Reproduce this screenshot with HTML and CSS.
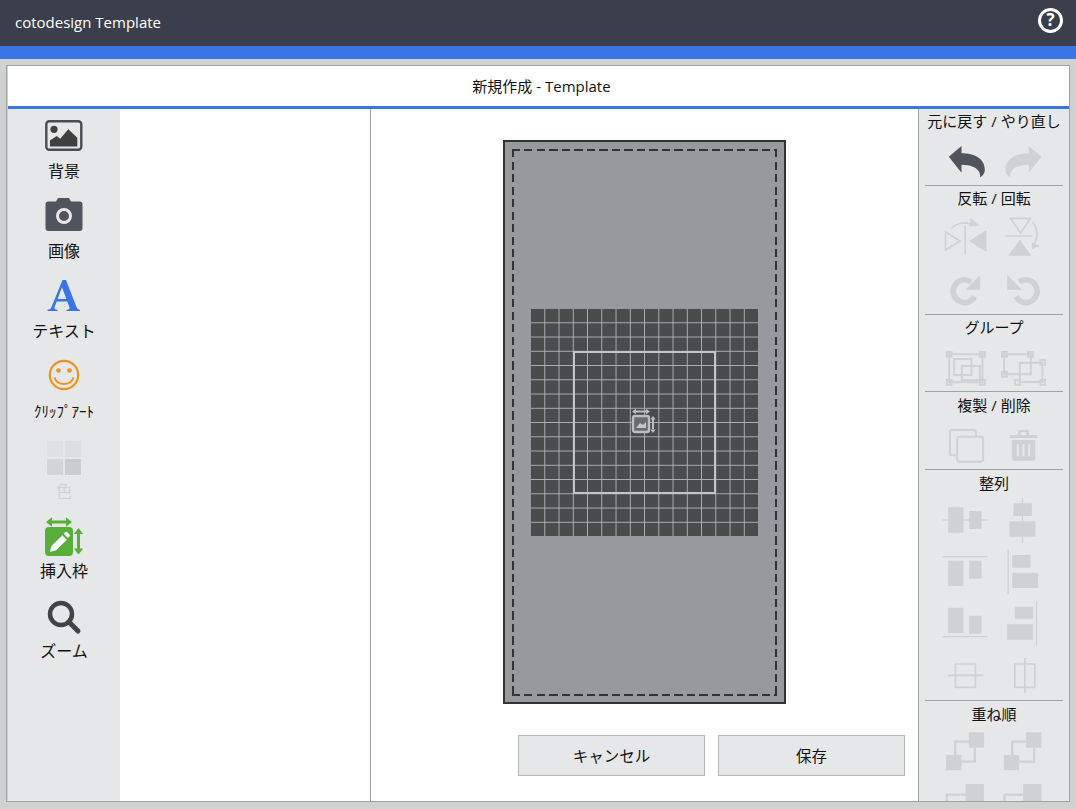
FILE: index.html
```html
<!DOCTYPE html>
<html lang="ja">
<head>
<meta charset="utf-8">
<title>cotodesign Template</title>
<link rel="stylesheet" href="styles.css">
</head>
<body>
<header class="topbar">
  <span class="brand">cotodesign Template</span>
  <span class="help">?</span>
</header>
<div class="accent"></div>
<main class="window">
  <h1 class="title">新規作成 - Template</h1>
  <div class="workspace">
    <nav class="tools">
      <div class="tool">
        <svg class="tool-icon" viewBox="0 0 40 40"><rect x="2.300" y="3.300" width="35" height="28.500" rx="3" fill="none" stroke="#4a4c52" stroke-width="2.400"/><circle cx="10" cy="11.300" r="3.600" fill="#404040"/><path d="M6 28.500v-6l6.700-4.500 3.500 2.700 8.100-9.400 9 8.400v8.800z" fill="#404040"/></svg>
        <span>背景</span>
      </div>
      <div class="tool">
        <svg class="tool-icon" viewBox="0 0 40 40"><path d="M4.500 3.500h7.500l2-3.500h11l2 3.500h8.500a3 3 0 0 1 3 3V30a3 3 0 0 1-3 3h-31a3 3 0 0 1-3-3V6.500a3 3 0 0 1 3-3z" fill="#50545d"/><circle cx="20" cy="18" r="6.500" fill="none" stroke="#e6e7e9" stroke-width="3"/></svg>
        <span>画像</span>
      </div>
      <div class="tool">
        <svg class="tool-icon" viewBox="0 0 40 40"><path d="M3.500 33v-1.300c2.200-.2 3.200-.8 4-2.800L18.500 2h3.500l10.500 27c.8 2 1.500 2.500 3.500 2.700V33H22.500v-1.300c3-.2 3.500-.8 2.800-2.800l-2-5.400H12.700l-2 5.300c-.7 2 0 2.700 2.800 2.900V33zM13.600 21h8.800L18 9.300z" fill="#3a75e6"/></svg>
        <span>テキスト</span>
      </div>
      <div class="tool">
        <svg class="tool-icon" viewBox="0 0 40 40"><circle cx="20" cy="17" r="14.200" fill="none" stroke="#ec931d" stroke-width="2.200"/><circle cx="14.500" cy="12.500" r="2.300" fill="#ec931d"/><circle cx="25.500" cy="12.500" r="2.300" fill="#ec931d"/><path d="M10.500 19.500c1.500 5 5.300 6.500 9.500 6.500s8-1.500 9.500-6.500" fill="none" stroke="#ec931d" stroke-width="2"/></svg>
        <span class="narrow">ｸﾘｯﾌﾟｱｰﾄ</span>
      </div>
      <div class="tool is-disabled">
        <svg class="tool-icon" viewBox="0 0 40 40"><rect x="3" y="3" width="16" height="16" fill="#e0e1e3"/><rect x="21" y="3" width="16" height="16" fill="#dcdddf"/><rect x="3" y="21" width="16" height="16" fill="#d3d4d6"/><rect x="21" y="21" width="16" height="16" fill="#cbccce"/></svg>
        <span>色</span>
      </div>
      <div class="tool">
        <svg class="tool-icon tool-icon-free" viewBox="0 0 40 40"><rect x="1" y="9" width="28" height="29" rx="4" fill="#58ae3a"/><path d="M6 4h18M34.500 14v18" fill="none" stroke="#58ae3a" stroke-width="3"/><path d="M2 4l6-4.700v9.400zM28 4l-6-4.700v9.400zM34.500 10l4.700 6h-9.400zM34.500 36.500l4.700-6h-9.400z" fill="#58ae3a"/><path d="M6 33.800l1.300-5.600L18.300 17.200l4.600 4.600L11.800 32.500zM19.700 15.800l1.700-1.700c.5-.5 1.100-.5 1.600 0l2.600 2.600c.5.5.5 1.100 0 1.600l-1.700 1.700z" fill="#fff"/></svg>
        <span>挿入枠</span>
      </div>
      <div class="tool">
        <svg class="tool-icon" viewBox="0 0 40 40"><circle cx="17" cy="16" r="11" fill="none" stroke="#404347" stroke-width="4.500"/><path d="M25 24l9 9" fill="none" stroke="#404347" stroke-width="5" stroke-linecap="round"/></svg>
        <span>ズーム</span>
      </div>
    </nav>

    <aside class="panel"></aside>

    <section class="stage">
      <div class="sheet">
        <div class="bleed"></div>
        <div class="grid">
          <div class="grid-frame"></div>
          <svg class="grid-icon" viewBox="0 0 26 26"><rect x="2" y="8" width="16" height="16" rx="2" fill="#6a6b6d" stroke="#bcbdbf" stroke-width="2.400"/><path d="M5 20l4-5 3 2 3-3v6H5z" fill="#c4c5c7"/><path d="M4 3.500h12M22 11v10" fill="none" stroke="#bcbdbf" stroke-width="2"/><path d="M1 3.500l4-2.700v5.400zM19 3.500l-4-2.700v5.400zM22 8l2.700 3.500h-5.400zM22 25l2.700-3.500h-5.400z" fill="#bcbdbf"/></svg>
        </div>
      </div>
      <div class="actions">
        <button class="btn" type="button">キャンセル</button>
        <button class="btn" type="button">保存</button>
      </div>
    </section>

    <aside class="props">
      <div class="prop-head">元に戻す / やり直し</div>
      <div class="row row-undo">
        <svg class="h36" viewBox="64.500 117 168 108"><path class="ink" d="M97 155l38-32v22c38 0 70 15 70 50 0 8-6 18-14 22 2-24-20-38-56-38v24z"/></svg>
        <svg class="h36" viewBox="235.500 117 168 108"><path class="off" d="M375 155l-38-32v22c-38 0-70 15-70 50 0 8 6 18 14 22-2-24 20-38 56-38v24z"/></svg>
      </div>
      <hr class="rule">
      <div class="prop-head">反転 / 回転</div>
      <div class="row row-flip">
        <svg class="h41" viewBox="64.500 330 168 123"><path class="off-line w5" d="M87 381l44 27-44 27zM146 363v84M105 370c20-20 50-20 68-8"/><path class="off" d="M210 375v66l-52-33zM163 339l26 24-30 1z"/></svg>
        <svg class="h41" viewBox="235.500 330 168 123"><path class="off-line w5" d="M282 340h60l-30 44zM265 393h82M347 350c18 20 18 50 4 70"/><path class="off" d="M275 452h70l-35-48zM346 412l24 11-24 10z"/></svg>
      </div>
      <div class="row row-rot">
        <svg class="h38" viewBox="64.500 495 168 114"><path class="off-line w17" d="M174 575a34 34 0 1 1-10-44"/><path class="off" d="M191 510v44h-44z"/></svg>
        <svg class="h38" viewBox="235.500 495 168 114"><path class="off-line w17" d="M298 575a34 34 0 1 0 10-44"/><path class="off" d="M272 510v44h44z"/></svg>
      </div>
      <hr class="rule">
      <div class="prop-head">グループ</div>
      <div class="row row-group">
        <svg class="h40" viewBox="64.500 24 168 120"><g class="off-line w6"><path d="M98 43h100v84H98z"/><path d="M113 57h52v48h-52zM136 78h54v42h-54z"/><path d="M91 36h14v14H91zM191 36h14v14h-14zM91 120h14v14H91zM191 120h14v14h-14z"/></g></svg>
        <svg class="h40" viewBox="235.500 24 168 120"><g class="off-line w6"><path d="M263 43h80v60h-80zM310 68h68v58h-68z"/><path d="M257 36h14v14h-14zM335 36h14v14h-14zM257 96h14v14h-14zM372 60h14v14h-14zM296 120h14v14h-14zM372 120h14v14h-14z"/></g></svg>
      </div>
      <hr class="rule">
      <div class="prop-head head-copy">複製 / 削除</div>
      <div class="row row-copy">
        <svg class="h38" viewBox="64.500 258 168 114"><path class="off-line w6" d="M120 346h-12c-5 0-8-3-8-8v-60c0-5 3-8 8-8h62c5 0 8 3 8 8v10"/><rect class="off-line w6" x="122" y="290" width="78" height="75" rx="7"/></svg>
        <svg class="h38" viewBox="235.500 258 168 114"><path class="off" fill-rule="evenodd" d="M280 285h24v-7c0-5 3-8 8-8h18c5 0 8 3 8 8v7h24v9h-82zM312 277v8h18v-8zM286 300h70v54c0 5-3 8-8 8h-54c-5 0-8-3-8-8zM301 313v36h6v-36zM318 313v36h6v-36zM335 313v36h6v-36z"/></svg>
      </div>
      <hr class="rule">
      <div class="prop-head head-align">整列</div>
      <div class="row row-align-a">
        <svg class="h47" viewBox="64.500 471 168 141"><path class="off-line w4" d="M78 540h135"/><path class="off" d="M95 502h46v76H95zM158 513h37v54h-37z"/></svg>
        <svg class="h47" viewBox="235.500 471 168 141"><path class="off-line w4" d="M318 474v134"/><path class="off" d="M291 490h55v38h-55zM279 544h78v46h-78z"/></svg>
      </div>
      <div class="row row-align-b">
        <svg class="h47" viewBox="64.500 624 168 141"><path class="off-line w4" d="M78 650h135"/><path class="off" d="M95 662h46v76H95zM158 662h37v54h-37z"/></svg>
        <svg class="h47" viewBox="235.500 624 168 141"><path class="off-line w4" d="M275 628v134"/><path class="off" d="M287 645h55v38h-55zM287 698h78v46h-78z"/></svg>
      </div>
      <div class="row row-align-c">
        <svg class="h47" viewBox="64.500 90 168 141"><path class="off-line w4" d="M78 200h135"/><path class="off" d="M95 113h46v76H95zM158 137h37v54h-37z"/></svg>
        <svg class="h47" viewBox="235.500 90 168 141"><path class="off-line w4" d="M360 93v134"/><path class="off" d="M295 110h55v38h-55zM272 163h78v46h-78z"/></svg>
      </div>
      <div class="row row-align-d">
        <svg class="h37" viewBox="64.500 261 168 111"><path class="off-line w5" d="M117 282h60v70h-60zM94 316h106"/></svg>
        <svg class="h37" viewBox="235.500 261 168 111"><path class="off-line w5" d="M295 282h60v70h-60zM325 264v104"/></svg>
      </div>
      <hr class="rule">
      <div class="prop-head head-order">重ね順</div>
      <div class="row row-order">
        <svg class="h41" viewBox="64.500 483 168 123"><path class="off" d="M157 487h46v46h-46zM89 555h46v46H89z"/><path class="off-line w7" d="M116 515h59v60h-59z"/></svg>
        <svg class="h41" viewBox="235.500 483 168 123"><path class="off-line w7" d="M287 555v-40h42M353 533v42h-45"/><path class="off" d="M329 487h46v46h-46zM262 555h46v46h-46z"/></svg>
      </div>
      <div class="row row-order-b">
        <svg class="h37" viewBox="64.500 639 168 111"><path class="off" d="M147 642h55v60h-55z"/><path class="off-line w7" d="M91 710v-36h60"/></svg>
        <svg class="h37" viewBox="235.500 639 168 111"><path class="off" d="M320 642h55v60h-55z"/><path class="off-line w7" d="M264 710v-36h60"/></svg>
      </div>
    </aside>
  </div>
</main>
</body>
</html>
```
FILE: styles.css
```css
* { box-sizing: border-box; }
html, body { height: 100%; }
body {
  margin: 0;
  overflow: hidden;
  background: #d0d2d2;
  color: #111;
  font-family: "Open Sans", "Noto Sans CJK JP", sans-serif;
  font-size: 15px;
  display: flex;
  flex-direction: column;
  height: 809px;
}
.topbar {
  flex: 0 0 46px;
  background: #3a3f4b;
  color: #fff;
  display: flex;
  align-items: center;
  justify-content: space-between;
  padding: 0 13px 3px 15px;
}
.brand { font-size: 15px; }
.help {
  width: 25px;
  height: 25px;
  margin-top: -3px;
  border: 3px solid #fff;
  border-radius: 50%;
  font-size: 17px;
  font-weight: 700;
  line-height: 18px;
  text-align: center;
}
.accent { flex: 0 0 13px; background: #3a75e6; }
.window {
  flex: 0 0 737px;
  min-height: 0;
  overflow: hidden;
  margin: 6px 6px 0;
  border: 1px solid #a0a2a6;
  padding-left: 1px;
  display: flex;
  flex-direction: column;
  background: #d0d2d2;
}
.title {
  margin: 0;
  flex: 0 0 43px;
  background: #fff;
  border-bottom: 3px solid #3a75e6;
  font-size: 15px;
  font-weight: 400;
  display: flex;
  align-items: center;
  justify-content: center;
  padding: 0 0 2px 6px;
}
.workspace { flex: 1 1 0; display: flex; min-height: 0; overflow: hidden; }
.tools {
  flex: 0 0 112px;
  background: #e6e7e9;
  padding-top: 9px;
}
.tool {
  height: 80px;
  display: flex;
  flex-direction: column;
  align-items: center;
  line-height: 22px;
  font-size: 16px;
}
.tool-icon { width: 40px; height: 40px; display: block; margin-bottom: 2px; }
.tool-icon-free { overflow: visible; }
.is-disabled { color: #cfd1d3; }
.narrow { font-size: 15px; }
.panel { flex: 0 0 251px; background: #fff; border-right: 1px solid #a0a2a6; }
.stage {
  flex: 0 0 547px;
  background: #fff;
  display: flex;
  flex-direction: column;
  align-items: center;
  padding-top: 31px;
}
.sheet {
  width: 283px;
  height: 564px;
  background: #96999d;
  border: 2px solid #333;
  display: flex;
  align-items: center;
  justify-content: center;
  position: relative;
}
.bleed {
  position: absolute;
  inset: 7px 7px 6px 7px;
  background-image:
    repeating-linear-gradient(to right, #333 0 8px, transparent 8px 12.500px),
    repeating-linear-gradient(to right, #333 0 8px, transparent 8px 12.500px),
    repeating-linear-gradient(to bottom, #333 0 8px, transparent 8px 12.500px),
    repeating-linear-gradient(to bottom, #333 0 8px, transparent 8px 12.500px);
  background-size: 100% 2px, 100% 2px, 2px 100%, 2px 100%;
  background-position: 0 0, 0 100%, 0 0, 100% 0;
  background-repeat: no-repeat;
}
.grid {
  width: 227px;
  height: 227px;
  position: relative;
  background-color: #4a4b4d;
  background-image:
    linear-gradient(to right, transparent 12.960px, #acaeb0 12.960px),
    linear-gradient(to bottom, transparent 12.960px, #acaeb0 12.960px);
  background-size: 14.260px 14.260px;
}
.grid-frame {
  position: absolute;
  inset: 42px;
  border: 2px solid #c4c5c7;
}
.grid-icon {
  position: absolute;
  left: 100px;
  top: 99px;
  width: 26px;
  height: 26px;
}
.actions {
  align-self: flex-end;
  margin-top: 31px;
  margin-right: 13px;
  display: flex;
  gap: 13px;
}
.btn {
  width: 187px;
  height: 41px;
  background: #e6e7e9;
  border: 1px solid #b4b6b8;
  border-radius: 0;
  color: #111;
  font: inherit;
  font-size: 15.500px;
  padding: 0;
}
.props {
  flex: 0 0 151px;
  border-left: 1px solid #a0a2a6;
  background: #e6e7e9;
  overflow: hidden;
  padding: 1px 6px 0;
}
.prop-head {
  height: 22px;
  margin-top: 1px;
  line-height: 22px;
  text-align: center;
  font-size: 15px;
  white-space: nowrap;
}
.props > .prop-head:first-child { margin-top: 0; }
.head-copy, .head-align, .head-order { margin-top: 2px; }
.rule { border: 0; border-top: 1px solid #a0a2a6; margin: 0; }
.row {
  display: flex;
  justify-content: center;
  align-items: flex-start;
  gap: 1px;
}
.row svg { width: 56px; display: block; flex: none; }
.h36 { height: 36px; }
.h37 { height: 37px; }
.h38 { height: 38px; }
.h40 { height: 40px; }
.h41 { height: 41px; }
.h47 { height: 47px; }
.row-undo { margin-top: 12px; padding-bottom: 5px; }
.row-flip { margin-top: 6px; }
.row-rot { margin-top: 14px; padding-bottom: 6px; }
.row-group { margin-top: 10px; padding-bottom: 3px; }
.row-copy { margin-top: 10px; padding-bottom: 5px; }
.row-align-a { margin-top: 3px; }
.row-align-b { margin-top: 4px; }
.row-align-c { margin-top: 5px; }
.row-align-d { margin-top: 10px; padding-bottom: 6px; }
.row-order { margin-top: 6px; }
.row-order-b { margin-top: 11px; }
.ink { fill: #50545d; }
.off { fill: #cfd1d3; }
.off-line { fill: none; stroke: #cfd1d3; }
.w4 { stroke-width: 4; }
.w5 { stroke-width: 5; }
.w6 { stroke-width: 6; }
.w7 { stroke-width: 7; }
.w17 { stroke-width: 17; }
```
